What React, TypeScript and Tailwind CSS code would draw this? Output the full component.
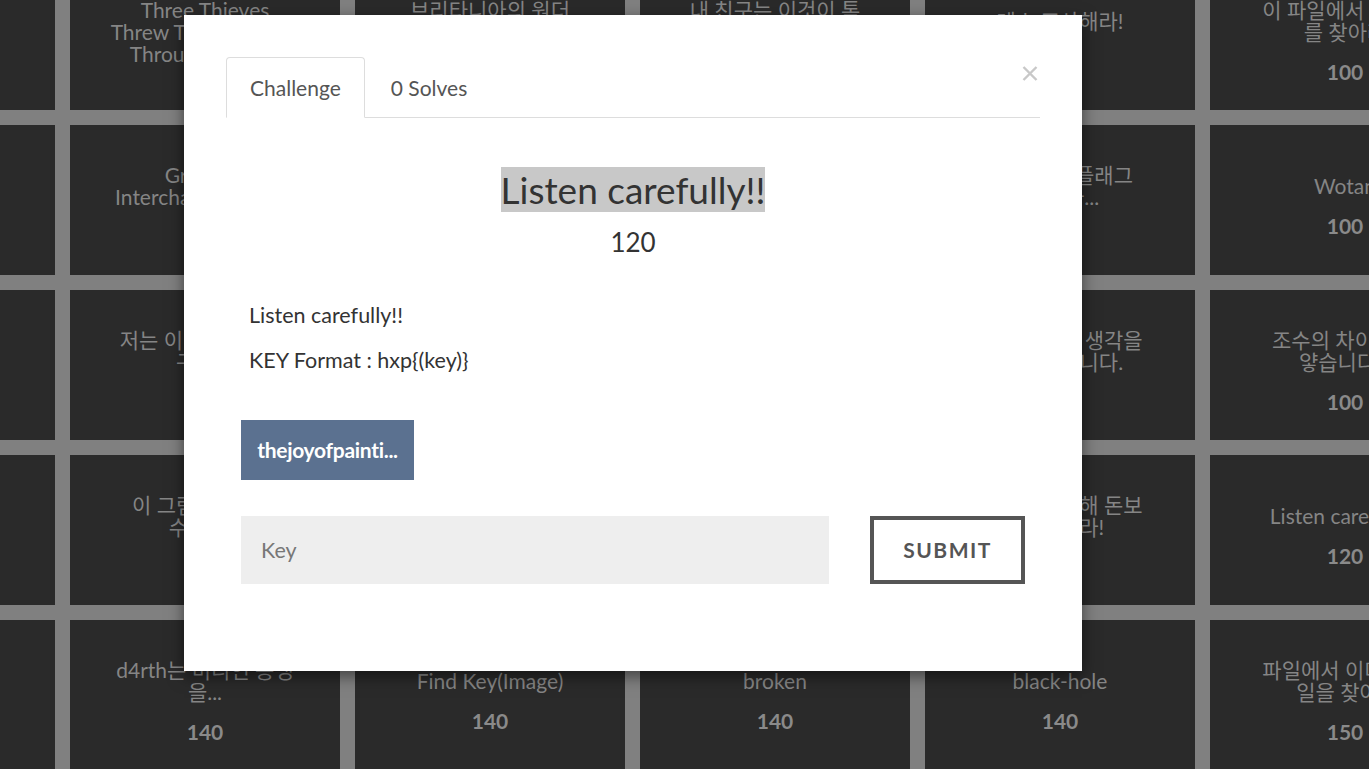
import React from "react";

type Tile = { lines: string[]; value: number };

// background board, 5 rows x 6 columns, only partly visible behind the modal
const board: Tile[][] = [
  [
    { lines: ["Start"], value: 100 },
    { lines: ["Three Thieves", "Threw Their Thumbs", "Through Three..."], value: 100 },
    { lines: ["브리타니아의 원더", "랜드..."], value: 100 },
    { lines: ["내 친구는 이것이 톡", "톡하다고..."], value: 100 },
    { lines: ["레스 조사해라!"], value: 100 },
    { lines: ["이 파일에서 플래그", "를 찾아라"], value: 100 },
  ],
  [
    { lines: ["Easy"], value: 100 },
    { lines: ["Graphics", "Interchange Format"], value: 100 },
    { lines: ["숨겨진 메시지"], value: 100 },
    { lines: ["패킷 분석"], value: 100 },
    { lines: ["이미지 속 플래그", "를 찾아..."], value: 100 },
    { lines: ["Wotan"], value: 100 },
  ],
  [
    { lines: ["사진 속에 숨겨진", "비밀"], value: 100 },
    { lines: ["저는 이 그림을 좋아", "구해요"], value: 100 },
    { lines: ["메모리 덤프"], value: 100 },
    { lines: ["로그 분석"], value: 100 },
    { lines: ["친구는 다른 생각을", "하고 있습니다."], value: 100 },
    { lines: ["조수의 차이가 하", "얗습니다..."], value: 100 },
  ],
  [
    { lines: ["오래된 공장", "..."], value: 120 },
    { lines: ["이 그림에서 찾을", "수 있나?"], value: 120 },
    { lines: ["USB"], value: 120 },
    { lines: ["디스크"], value: 120 },
    { lines: ["코드를 분석해 돈보", "를 구해라!"], value: 120 },
    { lines: ["Listen carefully!!"], value: 120 },
  ],
  [
    { lines: ["Zip"], value: 140 },
    { lines: ["d4rth는 미니언 동맹", "을..."], value: 140 },
    { lines: ["Find Key(Image)"], value: 140 },
    { lines: ["broken"], value: 140 },
    { lines: ["black-hole"], value: 140 },
    { lines: ["파일에서 이미지 파", "일을 찾아..."], value: 150 },
  ],
];

const font = { fontFamily: "Lato, 'Noto Sans CJK KR', sans-serif" };

function BoardTile({ tile }: { tile: Tile }) {
  return (
    <div className="flex flex-col items-center justify-center bg-[#2a2a2a] pt-[13px] text-center">
      <div className="max-h-[44px] text-[21px] leading-[22px] text-[#858585]">
        {tile.lines.map((l, i) => (
          <div key={i} className="whitespace-nowrap">
            {l}
          </div>
        ))}
      </div>
      <div className="mt-[17px] text-[21px] font-bold leading-[24px] text-[#8a8a8a]">{tile.value}</div>
    </div>
  );
}

export default function App() {
  return (
    <div className="relative h-[769px] w-[1369px] overflow-hidden bg-[#808080]" style={font}>
      {/* board */}
      <div className="ml-[-215px] mt-[-40px] grid w-max grid-cols-[repeat(6,270px)] auto-rows-[150px] gap-[15px]">
        {board.flat().map((t, i) => (
          <BoardTile key={i} tile={t} />
        ))}
      </div>

      {/* challenge modal */}
      <div className="absolute left-[184px] top-[15px] h-[656px] w-[898px] bg-white px-[42px] pt-[42px] shadow-[0_5px_15px_rgba(0,0,0,0.5)]">
        <div className="relative">
          <div className="flex border-b border-[#dddddd]">
            <div className="-mb-px mr-[2px] rounded-t-[4px] border border-[#dddddd] border-b-transparent bg-white px-[23px] py-[16px] text-[21px] leading-[27px] text-[#555555]">
              Challenge
            </div>
            <div className="-mb-px border border-transparent px-[23px] py-[16px] text-[21px] leading-[27px] text-[#555555]">
              0 Solves
            </div>
          </div>
          <button className="absolute right-[2px] top-[9px] p-0">
            <svg width="16" height="15" viewBox="0 0 16 15">
              <path d="M1.5 1 L14.5 14 M14.5 1 L1.5 14" stroke="#c8c8c8" strokeWidth="2.4" />
            </svg>
          </button>
        </div>

        <div className="mt-[50px] text-center">
          <h2 className="text-[37px] leading-[44px] text-[#333333]">
            <span className="bg-[#c8c8c8]">Listen carefully!!</span>
          </h2>
          <div className="mt-[12px] text-[26px] leading-[36px] text-[#333333]">120</div>
        </div>

        <div className="mt-[41px] pl-[23px] text-[21.5px] leading-[29px] text-[#333333]">
          <p>Listen carefully!!</p>
          <p className="mt-[16px]">KEY Format : hxp{"{(key)}"}</p>
        </div>

        <div className="mt-[45px] px-[15px]">
          <button className="flex h-[60px] w-[173px] items-center justify-center bg-[#5b7190] text-[21px] font-bold tracking-[-0.3px] text-white">
            thejoyofpainti...
          </button>

          <div className="mt-[36px] flex items-center justify-between">
            <input
              placeholder="Key"
              className="h-[68px] w-[588px] bg-[#eeeeee] px-[20px] text-[21.5px] text-[#333333] outline-none placeholder:text-[#777777]"
              style={font}
            />
            <button className="flex h-[68px] w-[155px] items-center justify-center border-[4px] border-[#555555] bg-white text-[21px] font-bold tracking-[1.5px] text-[#555555]">
              SUBMIT
            </button>
          </div>
        </div>
      </div>
    </div>
  );
}
